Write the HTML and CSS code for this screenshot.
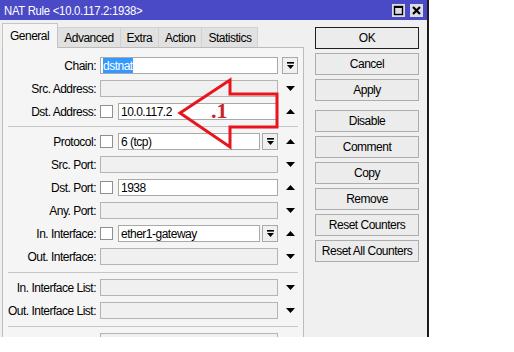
FILE: index.html
```html
<!DOCTYPE html>
<html>
<head>
<meta charset="utf-8">
<title>NAT Rule</title>
<link rel="stylesheet" href="styles.css">
</head>
<body>
<div class="window">
  <div class="titlebar">
    <span class="title">NAT Rule &lt;10.0.117.2:1938&gt;</span>
    <div class="tb-buttons">
      <span class="tb-btn"><svg width="11" height="11" viewBox="0 0 11 11"><rect x="1.5" y="1.5" width="8" height="8" fill="none" stroke="#000" stroke-width="1.4"/><rect x="1" y="1" width="9" height="2" fill="#000"/></svg></span>
      <span class="tb-btn"><svg width="11" height="11" viewBox="0 0 11 11"><path d="M2 2 L9 9 M9 2 L2 9" stroke="#000" stroke-width="2.2"/></svg></span>
    </div>
  </div>
  <div class="body">
    <div class="main">
      <div class="tabs">
        <div class="tab active">General</div>
        <div class="tab">Advanced</div>
        <div class="tab">Extra</div>
        <div class="tab">Action</div>
        <div class="tab">Statistics</div>
      </div>
      <div class="panel">
        <div class="row">
          <span class="label">Chain:</span>
          <div class="input"><span class="sel">dstnat</span></div>
          <span class="combo"><svg width="9" height="9" viewBox="0 0 9 9"><rect x="1" y="1" width="7" height="1.6" fill="#000"/><path d="M1 4 H8 L4.5 8 Z" fill="#000"/></svg></span>
        </div>
        <div class="row">
          <span class="label">Src. Address:</span>
          <div class="input off"></div>
          <span class="spin"><svg width="9" height="5" viewBox="0 0 9 5"><path d="M0 0 H9 L4.5 5 Z" fill="#000"/></svg></span>
        </div>
        <div class="row">
          <span class="label">Dst. Address:</span>
          <div class="field"><span class="cb"></span><div class="input grow">10.0.117.2</div></div>
          <span class="spin"><svg width="9" height="5" viewBox="0 0 9 5"><path d="M0 5 H9 L4.5 0 Z" fill="#000"/></svg></span>
        </div>
        <div class="sep"></div>
        <div class="row">
          <span class="label">Protocol:</span>
          <div class="field"><span class="cb"></span><div class="input grow">6 (tcp)</div><span class="combo"><svg width="9" height="9" viewBox="0 0 9 9"><rect x="1" y="1" width="7" height="1.6" fill="#000"/><path d="M1 4 H8 L4.5 8 Z" fill="#000"/></svg></span></div>
          <span class="spin"><svg width="9" height="5" viewBox="0 0 9 5"><path d="M0 5 H9 L4.5 0 Z" fill="#000"/></svg></span>
        </div>
        <div class="row">
          <span class="label">Src. Port:</span>
          <div class="input off"></div>
          <span class="spin"><svg width="9" height="5" viewBox="0 0 9 5"><path d="M0 0 H9 L4.5 5 Z" fill="#000"/></svg></span>
        </div>
        <div class="row">
          <span class="label">Dst. Port:</span>
          <div class="field"><span class="cb"></span><div class="input grow">1938</div></div>
          <span class="spin"><svg width="9" height="5" viewBox="0 0 9 5"><path d="M0 5 H9 L4.5 0 Z" fill="#000"/></svg></span>
        </div>
        <div class="row">
          <span class="label">Any. Port:</span>
          <div class="input off"></div>
          <span class="spin"><svg width="9" height="5" viewBox="0 0 9 5"><path d="M0 0 H9 L4.5 5 Z" fill="#000"/></svg></span>
        </div>
        <div class="row">
          <span class="label">In. Interface:</span>
          <div class="field"><span class="cb"></span><div class="input grow">ether1-gateway</div><span class="combo"><svg width="9" height="9" viewBox="0 0 9 9"><rect x="1" y="1" width="7" height="1.6" fill="#000"/><path d="M1 4 H8 L4.5 8 Z" fill="#000"/></svg></span></div>
          <span class="spin"><svg width="9" height="5" viewBox="0 0 9 5"><path d="M0 5 H9 L4.5 0 Z" fill="#000"/></svg></span>
        </div>
        <div class="row">
          <span class="label">Out. Interface:</span>
          <div class="input off"></div>
          <span class="spin"><svg width="9" height="5" viewBox="0 0 9 5"><path d="M0 0 H9 L4.5 5 Z" fill="#000"/></svg></span>
        </div>
        <div class="sep wide"></div>
        <div class="row">
          <span class="label">In. Interface List:</span>
          <div class="input off"></div>
          <span class="spin"><svg width="9" height="5" viewBox="0 0 9 5"><path d="M0 0 H9 L4.5 5 Z" fill="#000"/></svg></span>
        </div>
        <div class="row">
          <span class="label">Out. Interface List:</span>
          <div class="input off"></div>
          <span class="spin"><svg width="9" height="5" viewBox="0 0 9 5"><path d="M0 0 H9 L4.5 5 Z" fill="#000"/></svg></span>
        </div>
        <div class="sep wide"></div>
        <div class="row">
          <span class="label"></span>
          <div class="input off"></div>
          <span class="spin"></span>
        </div>
      </div>
    </div>
    <div class="actions">
      <div class="btn default">OK</div>
      <div class="btn">Cancel</div>
      <div class="btn">Apply</div>
      <div class="btn group">Disable</div>
      <div class="btn">Comment</div>
      <div class="btn">Copy</div>
      <div class="btn">Remove</div>
      <div class="btn">Reset Counters</div>
      <div class="btn">Reset All Counters</div>
    </div>
  </div>
  <svg class="callout" width="429" height="337" viewBox="0 0 429 337">
    <path d="M180 113 L230 80 L230 94 L277 94 L277 127 L230 127 L230 147 Z" fill="none" stroke="#e8141e" stroke-width="3" stroke-linejoin="miter"/>
    <text x="211" y="118" class="callout-text">.1</text>
  </svg>
</div>
</body>
</html>
```
FILE: styles.css
```css
* { box-sizing: border-box; }
html, body { margin: 0; padding: 0; background: #fff; }
body {
  font-family: "Liberation Sans", Arial, sans-serif;
  font-size: 12px;
  letter-spacing: -0.5px;
  color: #000;
}
.window {
  position: relative;
  width: 429px;
  height: 337px;
  background: #f0f0f0;
  border-right: 2px solid #1b1b1b;
  overflow: hidden;
}
.titlebar {
  height: 20px;
  background: #4a4ac6;
  color: #fff;
  display: flex;
  align-items: center;
  justify-content: space-between;
  padding: 0 4px;
}
.title {
  display: inline-block;
  font-size: 13px;
  letter-spacing: -0.3px;
  transform: scaleX(0.87);
  transform-origin: left center;
  white-space: nowrap;
}
.tb-buttons { display: flex; gap: 5px; }
.tb-btn {
  width: 13px;
  height: 13px;
  background: #dcdce6;
  display: flex;
  align-items: center;
  justify-content: center;
}
.body { display: flex; height: 317px; }
.main {
  width: 304px;
  padding: 3px 0 0 2px;
  display: flex;
  flex-direction: column;
}
.tabs {
  display: flex;
  align-items: flex-end;
  height: 24px;
}
.tab {
  height: 20px;
  padding: 0 6px;
  border: 1px solid #d2d2d2;
  border-bottom: none;
  border-left: none;
  background: #e1e1e1;
  display: flex;
  align-items: center;
}
.tab.active {
  height: 25px;
  margin-bottom: -1px;
  padding: 0 8px 0 7px;
  border-left: 1px solid #c4c4c4;
  border-color: #c4c4c4;
  background: #f5f5f5;
  position: relative;
  z-index: 1;
}
.panel {
  width: 302px;
  flex: 1;
  border: 1px solid #bcbcbc;
  border-bottom: none;
  background: #f5f5f5;
  padding-top: 6px;
}
.row {
  display: grid;
  grid-template-columns: 93px 178px 16px;
  column-gap: 4px;
  align-items: center;
  height: 23px;
}
.label { text-align: right; white-space: nowrap; }
.input {
  height: 17px;
  border: 1px solid #a9a9a9;
  background: #fff;
  padding: 0 2px;
  display: flex;
  align-items: center;
  white-space: nowrap;
  overflow: hidden;
}
.input.off { background: #f0f0f0; border-color: #b4b4b4; }
.input.grow { flex: 1; min-width: 0; }
.sel { background: #3399ff; color: #fff; padding: 1px 0; }
.field { display: flex; align-items: center; gap: 2px; }
.cb {
  width: 13px;
  height: 13px;
  margin-right: 3px;
  border: 1px solid #8f8f8f;
  background: #fff;
  flex: none;
}
.combo {
  width: 16px;
  height: 17px;
  flex: none;
  border: 1px solid #a9a9a9;
  background: #f0f0f0;
  display: flex;
  align-items: center;
  justify-content: center;
}
.spin { display: flex; justify-content: center; align-items: center; }
.sep { height: 7px; display: flex; align-items: center; padding: 0 5px; }
.sep.wide { height: 8px; }
.sep::before { content: ""; flex: 1; height: 1px; background: #c6c6c6; }
.actions {
  display: flex;
  flex-direction: column;
  gap: 4px;
  width: 104px;
  margin-left: 11px;
  padding-top: 7px;
}
.btn {
  height: 22px;
  border: 1px solid #adadad;
  background: #ececec;
  display: flex;
  align-items: center;
  justify-content: center;
  white-space: nowrap;
}
.btn.default { border: 1px solid #1f1f1f; }
.btn.group { margin-top: 5px; }
.callout { position: absolute; left: 0; top: 0; pointer-events: none; }
.callout-text {
  font-family: "Liberation Serif", "Times New Roman", serif;
  font-weight: bold;
  font-size: 22px;
  letter-spacing: 0;
  fill: #c3262c;
}
```
